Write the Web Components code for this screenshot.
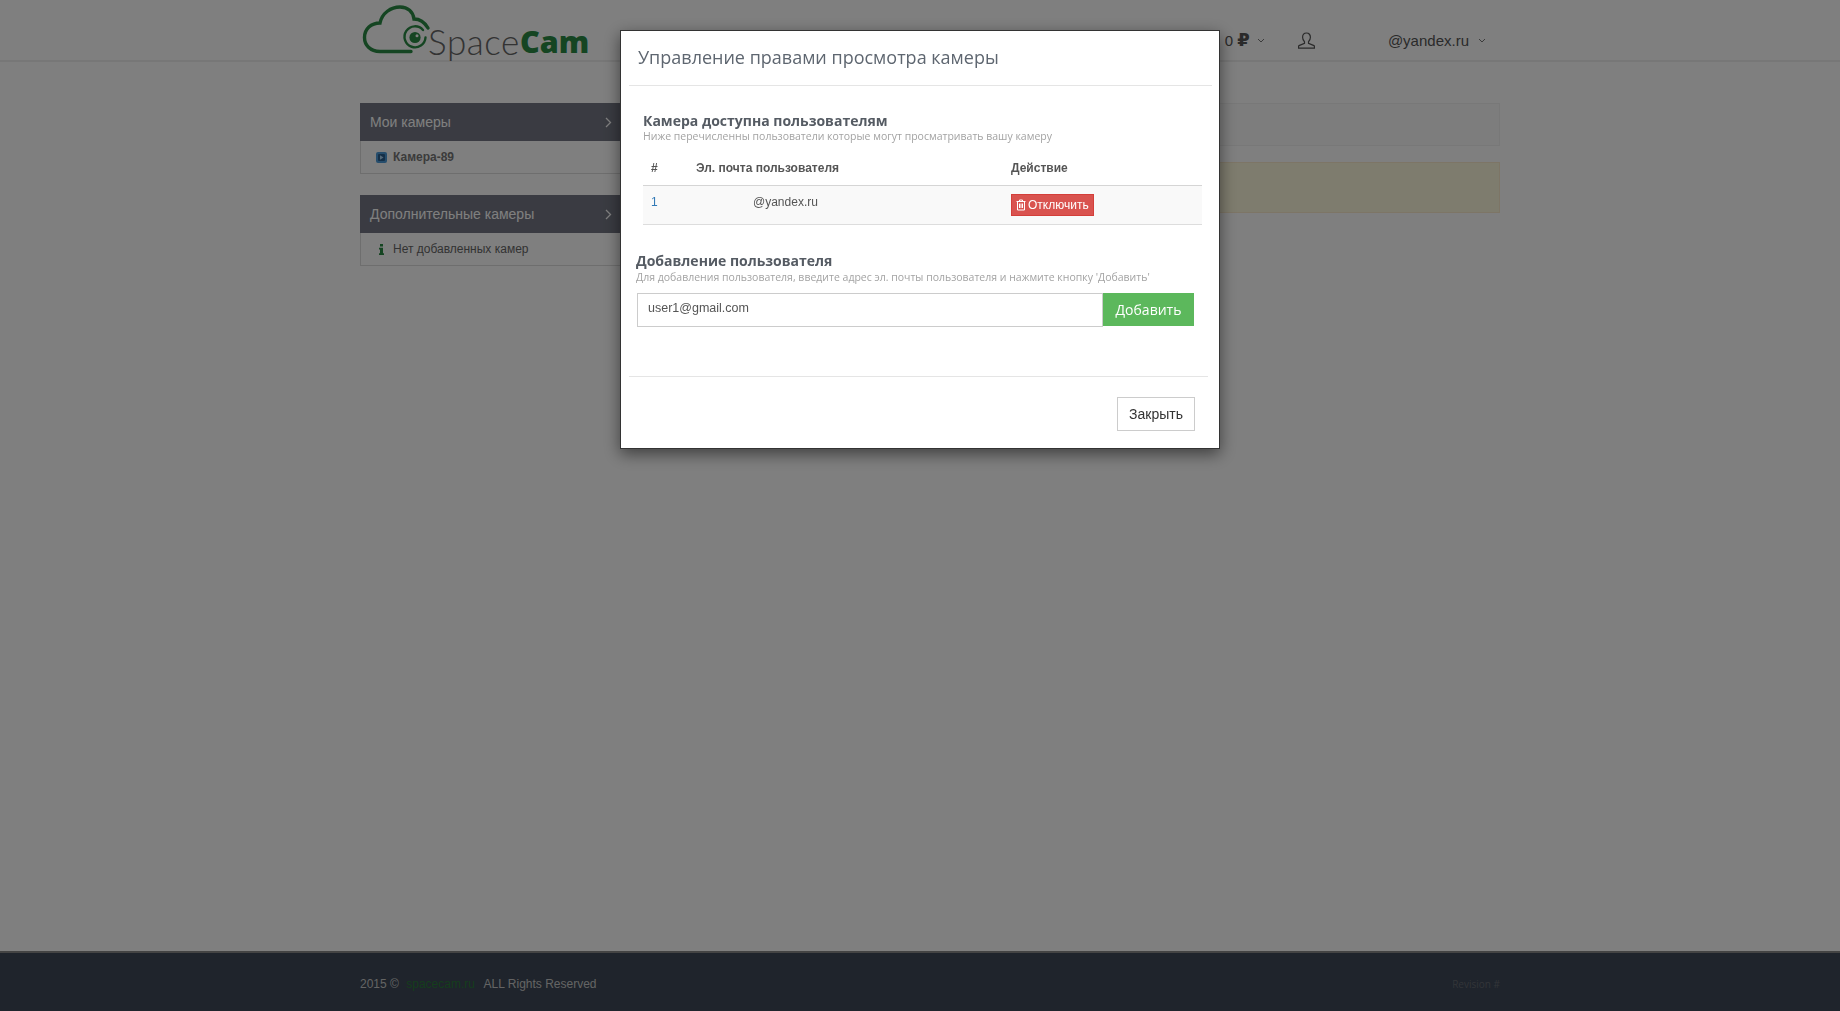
<!DOCTYPE html>
<html lang="ru">
<head>
<meta charset="utf-8">
<title>SpaceCam</title>
<style>
html, body { margin: 0; height: 100%; }
body { background: #fff; font-family: "Liberation Sans", Arial, sans-serif; color: #555; }
</style>
</head>
<body>
<site-page>
    <site-header slot="header"></site-header>
    <side-panel slot="side" heading="Мои камеры">
        <side-item kind="play" strong>Камера-89</side-item>
    </side-panel>
    <side-panel slot="side" heading="Дополнительные камеры">
        <side-item kind="info">Нет добавленных камер</side-item>
    </side-panel>
    <notice-box slot="content"></notice-box>
    <notice-box slot="content" tone="warning"></notice-box>
    <site-footer slot="footer"></site-footer>
</site-page>

<modal-dialog heading="Управление правами просмотра камеры">
    <camera-users></camera-users>
    <add-user></add-user>
    <close-button slot="footer">Закрыть</close-button>
</modal-dialog>

<script>
class SitePage extends HTMLElement {
    constructor() {
        super();
        this.attachShadow({ mode: 'open' });
        this.shadowRoot.innerHTML = `
            <style>
                :host { display: flex; flex-direction: column; height: 1011px; overflow: hidden; }
                main { flex: 1; width: 1140px; margin-left: 360px; padding-top: 41px; display: grid; grid-template-columns: 285px 1fr; column-gap: 15px; align-content: start; }
                .side { display: flex; flex-direction: column; gap: 21px; }
                .content { display: flex; flex-direction: column; gap: 16px; }
            </style>
            <slot name="header"></slot>
            <main>
                <div class="side"><slot name="side"></slot></div>
                <div class="content"><slot name="content"></slot></div>
            </main>
            <slot name="footer"></slot>
        `;
    }
}

class SiteHeader extends HTMLElement {
    constructor() {
        super();
        this.attachShadow({ mode: 'open' });
        this.shadowRoot.innerHTML = `
            <style>
                :host { display: block; height: 60px; border-bottom: 2px solid #eee; background: #fff; }
                .bar { width: 1140px; height: 60px; margin-left: 360px; display: flex; color: #555; font: 15px "Liberation Sans", Arial, sans-serif; }
                .logo { display: flex; align-items: flex-start; height: 60px; flex: none; margin-left: 1px; }
                .logo svg { width: 70px; height: 60px; flex: none; margin-top: 1px; }
                .word { font: 300 35px/60px Lato, sans-serif; color: #666; margin: 11px 0 0 -3px; height: 49px; letter-spacing: .6px; white-space: nowrap; }
                .word b { display: inline-block; transform: translateY(-2px); font: 800 30.500px/60px "Open Sans", sans-serif; color: #2a8a45; letter-spacing: 0; }
                .right { margin-left: auto; display: flex; align-items: center; padding-top: 20px; height: 40px; }
                .balance { display: flex; align-items: center; gap: 7px; }
                .rub { font: bold 18px/15px "DejaVu Sans", sans-serif; }
                .user { width: 17px; height: 17px; margin-left: 33px; }
                .mail { margin-left: 73px; margin-right: 14px; display: flex; align-items: center; gap: 9px; }
                .chev { width: 8px; height: 5px; flex: none; }
            </style>
            <div class="bar">
                <div class="logo">
                    <svg viewBox="0 0 70 60" fill="none" stroke="#2a8a45" stroke-linecap="round">
                        <path d="M50 50.500H19C9 50.500 3.500 44 3.500 36.500 3.500 28 10 22 19 22 21 12 30 6 39 6 47 6 52 11 53 18 59 18 64 22 67 27" stroke-width="3.400"/>
                        <path d="M62 29A10.500 10.500 0 1 0 64.500 36.500" stroke-width="2.400"/>
                        <circle cx="54" cy="36.500" r="5.600" fill="#2a8a45" stroke="none"/>
                        <circle cx="56" cy="34.700" r="1.500" fill="#fff" stroke="none"/>
                    </svg>
                    <span class="word">Space<b>Cam</b></span>
                </div>
                <div class="right">
                    <span class="balance"><span>Баланс: 0 <span class="rub">₽</span></span>
                        <svg class="chev" viewBox="0 0 8 5" fill="none" stroke="#777" stroke-width="1"><path d="M1 1l3 3 3-3"/></svg>
                    </span>
                    <svg class="user" viewBox="0 0 17 17" fill="none" stroke="#555" stroke-width="1.200"><path d="M8.500 1C6 1 4.600 2.900 4.600 5.300c0 2 .8 3.400 1.900 4.400v1.600L1 13.600c-.4.300-.5.800-.5 2.600h16c0-1.800-.1-2.300-.5-2.600l-5.500-2.300V9.700c1.100-1 1.900-2.400 1.900-4.400C12.400 2.900 11 1 8.500 1z"/></svg>
                    <span class="mail">@yandex.ru
                        <svg class="chev" viewBox="0 0 8 5" fill="none" stroke="#777" stroke-width="1"><path d="M1 1l3 3 3-3"/></svg>
                    </span>
                </div>
            </div>
        `;
    }
}

class SidePanel extends HTMLElement {
    constructor() {
        super();
        this.attachShadow({ mode: 'open' });
        this.shadowRoot.innerHTML = `
            <style>
                :host { display: block; font-family: "Liberation Sans", Arial, sans-serif; }
                .head { height: 38px; background: #747784; color: #fff; display: flex; align-items: center; justify-content: space-between; padding: 0 10px; font-size: 14px; }
                svg { width: 7px; height: 11px; margin-right: 23px; }
                .body { border: 1px solid #ddd; border-top: 0; height: 32px; display: flex; align-items: center; }
            </style>
            <div class="head"><span></span>
                <svg viewBox="0 0 7 11" fill="none" stroke="#fff" stroke-width="1.300"><path d="M1 1l4.500 4.500L1 10"/></svg>
            </div>
            <div class="body"><slot></slot></div>
        `;
        this.shadowRoot.querySelector('span').textContent = this.getAttribute('heading');
    }
}

class SideItem extends HTMLElement {
    constructor() {
        super();
        this.attachShadow({ mode: 'open' });
        const icon = this.getAttribute('kind') === 'play'
            ? `<svg viewBox="0 0 11 11"><rect width="11" height="11" rx="2" fill="#4d9bd9"/><rect x="2" y="2" width="7" height="7" rx="1" fill="#2a5f8f"/><path d="M4 3.200v4.600l3.500-2.300z" fill="#a9d2f2"/></svg>`
            : `<svg viewBox="0 0 11 11"><path d="M4 0h3v2.400H4zM3 3.800h4v5.400h1V11H3V9.200h1V5.600H3z" fill="#2a8a45"/></svg>`;
        this.shadowRoot.innerHTML = `
            <style>
                :host { display: flex; align-items: center; font: 12px "Liberation Sans", Arial, sans-serif; color: #666; padding-left: 15px; }
                :host([strong]) { font-weight: bold; color: #777; }
                svg { width: 11px; height: 11px; margin-right: 6px; flex: none; }
            </style>
            ${icon}<slot></slot>
        `;
    }
}

class NoticeBox extends HTMLElement {
    constructor() {
        super();
        this.attachShadow({ mode: 'open' });
        this.shadowRoot.innerHTML = `
            <style>
                :host { display: block; height: 41px; background: #fbfbfb; border: 1px solid #f1f1f1; }
                :host([tone="warning"]) { height: 49px; background: #fcf8dc; border-color: #faebcc; }
            </style>
        `;
    }
}

class SiteFooter extends HTMLElement {
    constructor() {
        super();
        this.attachShadow({ mode: 'open' });
        this.shadowRoot.innerHTML = `
            <style>
                :host { display: block; height: 58px; border-top: 2px solid #888; background: #3e4858; flex: none; }
                .bar { width: 1140px; height: 60px; margin-left: 360px; padding-top: 2px; box-sizing: border-box; display: flex; align-items: center; justify-content: space-between; color: #c8c8c8; font: 12px "Liberation Sans", Arial, sans-serif; }
                a { color: #2a7a3a; margin: 0 6px 0 4px; text-decoration: none; }
                .rev { color: #656a72; font: 10px "Open Sans", sans-serif; }
            </style>
            <div class="bar">
                <span>2015 © <a>spacecam.ru</a> ALL Rights Reserved</span>
                <span class="rev">Revision #</span>
            </div>
        `;
    }
}

class ModalDialog extends HTMLElement {
    constructor() {
        super();
        this.attachShadow({ mode: 'open' });
        this.shadowRoot.innerHTML = `
            <style>
                :host { position: fixed; inset: 0; background: rgba(0, 0, 0, 0.5); display: block; z-index: 1000; }
                .box { position: absolute; left: 620px; top: 30px; width: 598px; background: #fff; border: 1px solid #333; box-shadow: 0 5px 15px rgba(0, 0, 0, 0.5); }
                h4 { margin: 0; height: 54px; box-sizing: border-box; padding: 0 16px 0 17px; font: 400 18px/52px "Open Sans", sans-serif; color: #5e6670; white-space: nowrap; }
                .rule { height: 1px; background: #e5e5e5; margin: 0 7px 0 8px; }
                .rule.low { margin-right: 11px; }
                .foot { display: flex; justify-content: flex-end; padding: 20px 24px 17px 0; }
            </style>
            <div class="box">
                <h4></h4>
                <div class="rule"></div>
                <slot></slot>
                <div class="rule low"></div>
                <div class="foot"><slot name="footer"></slot></div>
            </div>
        `;
        this.shadowRoot.querySelector('h4').textContent = this.getAttribute('heading');
    }
}

const sectionHead = `
    h5 { margin: 0; font: 700 14px/17px "Open Sans", sans-serif; color: #555b63; white-space: nowrap; }
    p { margin: 0; font: 400 10.500px/14px "Open Sans", sans-serif; color: #a3a3a3; white-space: nowrap; }
`;

class CameraUsers extends HTMLElement {
    constructor() {
        super();
        this.attachShadow({ mode: 'open' });
        this.shadowRoot.innerHTML = `
            <style>
                :host { display: block; padding: 26px 17px 0 22px; font: 12px "Liberation Sans", Arial, sans-serif; color: #555; }
                ${sectionHead}
                .row { display: grid; grid-template-columns: 45px 315px 1fr; align-items: center; }
                .row > div { padding-left: 8px; }
                .thead { height: 34px; margin-top: 8px; border-bottom: 1px solid #d5d5d5; font-weight: bold; }
                .tbody { height: 38px; background: #f9f9f9; border-bottom: 1px solid #ddd; }
                .num { color: #337ab7; }
                .mail { padding-left: 65px !important; }
                .tbody .num, .mail { margin-top: -7px; }
                button { display: flex; align-items: center; gap: 2px; height: 22px; padding: 0 4px; background: #d9534f; border: 1px solid #d43f3a; color: #fff; font: 12px/18px "Liberation Sans", Arial, sans-serif; white-space: nowrap; }
                svg { width: 10px; height: 12px; }
            </style>
            <h5>Камера доступна пользователям</h5>
            <p>Ниже перечисленны пользователи которые могут просматривать вашу камеру</p>
            <div class="row thead"><div>#</div><div>Эл. почта пользователя</div><div>Действие</div></div>
            <div class="row tbody">
                <div class="num">1</div>
                <div class="mail">@yandex.ru</div>
                <div><button>
                    <svg viewBox="0 0 10 12" fill="none" stroke="#fff" stroke-width="1"><path d="M.5 2.500h9M3.500 2.500V1h3v1.500M1.500 2.500v8.500h7V2.500M3.500 4.500v4.500M5 4.500v4.500M6.500 4.500v4.500"/></svg>
                    Отключить</button></div>
            </div>
        `;
    }
}

class AddUser extends HTMLElement {
    constructor() {
        super();
        this.attachShadow({ mode: 'open' });
        this.shadowRoot.innerHTML = `
            <style>
                :host { display: block; padding: 27px 25px 49px 15px; }
                ${sectionHead}
                p { margin-top: 1px; }
                form { display: flex; margin: 9px 0 0 1px; height: 34px; }
                input { flex: 1; min-width: 0; box-sizing: border-box; height: 34px; padding: 0 10px 5px; margin: 0; border: 1px solid #ccc; border-radius: 0; font: 12.500px "Liberation Sans", Arial, sans-serif; color: #555; outline: 0; }
                button { width: 91px; height: 33px; border: 0; background: #5cb85c; color: #fff; font: 400 14px "Open Sans", sans-serif; padding: 0; }
            </style>
            <h5>Добавление пользователя</h5>
            <p>Для добавления пользователя, введите адрес эл. почты пользователя и нажмите кнопку 'Добавить'</p>
            <form onsubmit="return false"><input type="text" value="user1@gmail.com"><button>Добавить</button></form>
        `;
    }
}

class CloseButton extends HTMLElement {
    constructor() {
        super();
        this.attachShadow({ mode: 'open' });
        this.shadowRoot.innerHTML = `
            <style>
                :host { display: flex; align-items: center; justify-content: center; box-sizing: border-box; width: 78px; height: 34px; border: 1px solid #ccc; background: #fff; color: #333; font: 14px "Liberation Sans", Arial, sans-serif; }
            </style>
            <slot></slot>
        `;
    }
}

customElements.define('site-page', SitePage);
customElements.define('site-header', SiteHeader);
customElements.define('side-panel', SidePanel);
customElements.define('side-item', SideItem);
customElements.define('notice-box', NoticeBox);
customElements.define('site-footer', SiteFooter);
customElements.define('modal-dialog', ModalDialog);
customElements.define('camera-users', CameraUsers);
customElements.define('add-user', AddUser);
customElements.define('close-button', CloseButton);
</script>
</body>
</html>
